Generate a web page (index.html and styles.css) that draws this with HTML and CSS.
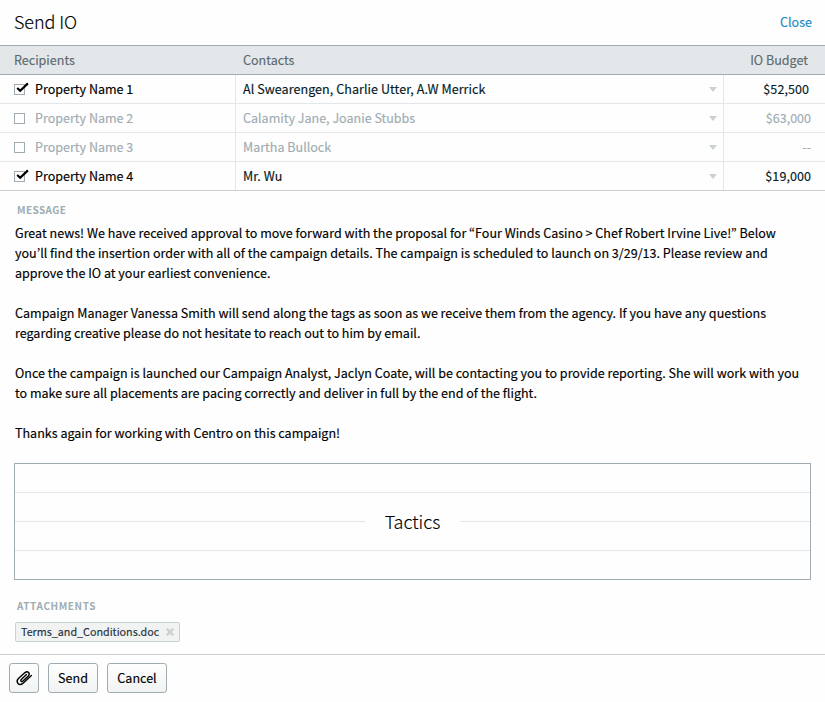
FILE: index.html
```html
<!DOCTYPE html>
<html lang="en">
<head>
<meta charset="utf-8">
<title>Send IO</title>
<link rel="stylesheet" href="styles.css">
</head>
<body>
<div class="dialog">
  <header class="title-bar">
    <h1 class="title">Send IO</h1>
    <a class="close">Close</a>
  </header>
  <section class="recipients">
    <div class="row head">
      <div class="name">Recipients</div><div class="contacts">Contacts</div><div class="budget">IO Budget</div>
    </div>
    <div class="row on">
      <div class="name"><svg class="check" width="16" height="14" viewBox="0 0 16 14"><rect class="box" x="0.5" y="2.5" width="10" height="10"/><path class="tick" d="M3.2 6L6.2 8.8L13.9 1.4"/></svg><span>Property Name 1</span></div>
      <div class="contacts"><span>Al Swearengen, Charlie Utter, A.W Merrick</span><i class="arrow"></i></div>
      <div class="budget inset">$52,500</div>
    </div>
    <div class="row off">
      <div class="name"><svg class="check" width="16" height="14" viewBox="0 0 16 14"><rect class="box" x="0.5" y="2.5" width="10" height="10"/></svg><span>Property Name 2</span></div>
      <div class="contacts"><span>Calamity Jane, Joanie Stubbs</span><i class="arrow"></i></div>
      <div class="budget">$63,000</div>
    </div>
    <div class="row off">
      <div class="name"><svg class="check" width="16" height="14" viewBox="0 0 16 14"><rect class="box" x="0.5" y="2.5" width="10" height="10"/></svg><span>Property Name 3</span></div>
      <div class="contacts"><span>Martha Bullock</span><i class="arrow"></i></div>
      <div class="budget">--</div>
    </div>
    <div class="row on">
      <div class="name"><svg class="check" width="16" height="14" viewBox="0 0 16 14"><rect class="box" x="0.5" y="2.5" width="10" height="10"/><path class="tick" d="M3.2 6L6.2 8.8L13.9 1.4"/></svg><span>Property Name 4</span></div>
      <div class="contacts"><span>Mr. Wu</span><i class="arrow"></i></div>
      <div class="budget">$19,000</div>
    </div>
  </section>
  <section class="message">
    <h2 class="label">MESSAGE</h2>
    <p>Great news! We have received approval to move forward with the proposal for “Four Winds Casino &gt; Chef Robert Irvine Live!” Below<br>you’ll find the insertion order with all of the campaign details. The campaign is scheduled to launch on 3/29/13. Please review and<br>approve the IO at your earliest convenience.</p>
    <p>Campaign Manager Vanessa Smith will send along the tags as soon as we receive them from the agency. If you have any questions<br>regarding creative please do not hesitate to reach out to him by email.</p>
    <p>Once the campaign is launched our Campaign Analyst, Jaclyn Coate, will be contacting you to provide reporting. She will work with you<br>to make sure all placements are pacing correctly and deliver in full by the end of the flight.</p>
    <p>Thanks again for working with Centro on this campaign!</p>
  </section>
  <section class="tactics">
    <div class="line"></div>
    <div class="line middle"><span class="caption">Tactics</span></div>
    <div class="line"></div>
    <div class="line"></div>
  </section>
  <section class="attachments">
    <h2 class="label wide">ATTACHMENTS</h2>
    <div class="chip"><span>Terms_and_Conditions.doc</span><svg width="8" height="8" viewBox="0 0 8 8"><path d="M0.8 0.8L7.2 7.2M7.2 0.8L0.8 7.2"/></svg></div>
  </section>
  <footer class="actions">
    <button class="btn clip" aria-label="Attach"><svg width="18" height="18" viewBox="0 0 18 18"><path d="M11.4 5.6L6.3 10.4C5 11.8 6.6 13.4 8 12.1L13.3 7C15.6 4.4 12.8 1.2 10 3.6L3.4 9.6C0.2 12.9 4 17.6 7.8 14.4L16.4 6.6"/></svg></button>
    <button class="btn send">Send</button>
    <button class="btn cancel">Cancel</button>
  </footer>
</div>
</body>
</html>
```
FILE: styles.css
```css
* { box-sizing: border-box; }
body {
  margin: 0;
  background: #fff;
  color: #000;
  font: 12.54px/20px "Noto Sans CJK KR", "Noto Sans", sans-serif;
  -webkit-text-stroke: 0.15px;
}
.dialog { width: 825px; height: 702px; background: #fefefe; display: flex; flex-direction: column; overflow: hidden; }
.title-bar { height: 45px; display: flex; align-items: center; justify-content: space-between; padding: 0 13px 2px 14px; }
.title { margin: 0 0 1px; font-size: 18px; font-weight: 300; letter-spacing: -0.1px; }
.close { color: #1b8bc4; }
.row { display: flex; height: 29px; border-bottom: 1px solid #e3e7e9; line-height: 28px; color: #0b2431; }
.row:last-child { border-bottom-color: #c9d1d5; }
.head { height: 30px; background: #e3e7e9; border-top: 1px solid #a0acb2; border-bottom-color: #a0acb2; color: #5c6a70; }
.name { width: 235px; padding-left: 14px; display: flex; align-items: center; color: #000; }
.head .name { color: inherit; }
.check { margin-right: 5px; fill: none; flex: none; }
.box { stroke: #a0acb2; }
.tick { stroke: #000; stroke-width: 2.2; }
.contacts { width: 488px; padding: 0 6.5px 0 7px; border-left: 1px solid #e3e7e9; display: flex; align-items: center; justify-content: space-between; }
.head .contacts { border-left-color: transparent; }
.budget { flex: 1; border-left: 1px solid #e3e7e9; text-align: right; padding-right: 14px; }
.on .contacts, .on .budget { color: #041a26; letter-spacing: 0.06px; -webkit-text-stroke: 0.15px; }
.inset { padding-right: 16px; }
.head .budget { padding-right: 17px; }
.arrow { border: 4px solid transparent; border-top: 5px solid #c9d1d5; border-bottom: 0; }
.off, .off .name { color: #a0acb2; }
.label { margin: 0; font-size: 10px; line-height: 14px; font-weight: 700; letter-spacing: 0.4px; color: #a0acb2; -webkit-text-stroke: 0; }
.wide { letter-spacing: 0.6px; }
.message { height: 272px; padding: 12px 14px 0 15px; white-space: nowrap; }
.message .label { padding-left: 2px; margin-bottom: 6px; }
.message p { margin: 0 0 20px; }
.tactics { display: grid; grid-template-rows: 29px 29px 29px 28px; height: 117px; margin: 0 14px; border: 1px solid #a0acb2; }
.line { border-bottom: 1px solid #e3e7e9; }
.line:last-child { border-bottom: 0; }
.middle { display: flex; justify-content: center; }
.caption { height: 58px; line-height: 56px; background: #fefefe; padding: 0 20px; font-size: 18px; font-weight: 300; clip-path: inset(10px 0); }
.attachments { height: 74px; padding: 19px 0 0 15px; }
.attachments .label { padding-left: 2px; margin-bottom: 9px; }
.chip { display: flex; align-items: center; justify-content: space-between; width: 165px; height: 20px; line-height: 16px; padding: 0 5px 1px; border: 1px solid #c9d1d5; border-radius: 2px; background: #f1f3f3; color: #26323a; font-size: 10.75px; }
.chip svg { stroke: #c9d1d5; stroke-width: 2.4; }
.actions { flex: 1; border-top: 1px solid #c9d1d5; display: flex; gap: 9px; padding: 8px 9px; }
.btn { height: 30px; padding: 0; font: inherit; color: #000; border: 1px solid #a0acb2; border-radius: 3px; background: linear-gradient(#fefefe, #f1f3f3); display: flex; align-items: center; justify-content: center; }
.clip { width: 30px; }
.clip svg { fill: none; stroke: #000; stroke-width: 1.4; stroke-linecap: round; }
.send { width: 50px; }
.cancel { width: 60px; }
```
